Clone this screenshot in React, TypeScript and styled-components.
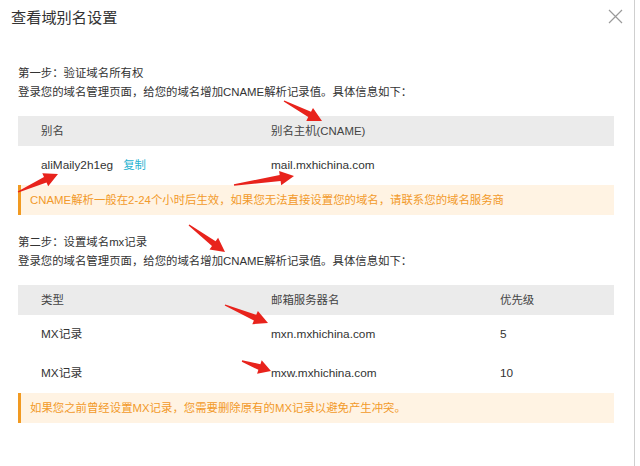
import React from "react";
import styled, { createGlobalStyle } from "styled-components";

const Global = createGlobalStyle`
  html, body { margin: 0; padding: 0; background: #ffffff; }
  body { font-family: "Liberation Sans", "Noto Sans CJK SC", sans-serif; color: #333; }
`;

const Dialog = styled.div`
  position: relative;
  width: 634px;
  height: 466px;
  border-right: 1px solid #cfcfcf;
  background: #fff;
  box-sizing: content-box;
`;

const Header = styled.div`
  display: flex;
  justify-content: space-between;
  align-items: center;
  padding: 8px 11px 0 11px;
  height: 20px;
`;

const Title = styled.h1`
  margin: 0;
  font-size: 15.2px;
  line-height: 20px;
  font-weight: normal;
  color: #333;
`;

const Close = styled.button`
  width: 16px;
  height: 16px;
  padding: 0;
  border: 0;
  background: transparent;
  display: flex;
  align-items: center;
  justify-content: center;
  margin-top: -4px;
`;

const Body = styled.div`
  padding: 0 20px 0 18px;
`;

const Step = styled.section<{ $top: number }>`
  margin-top: ${(p) => p.$top}px;
  font-size: 11.4px;
  line-height: 19px;
`;

const Text = styled.div`
  font-size: 11.4px;
  line-height: 19px;
  color: #333;
`;

const Table = styled.div`
  margin-top: 14.5px;
  display: grid;
  grid-template-columns: 230px 229px 1fr;
`;

const HeadCell = styled.div`
  background: #ebebeb;
  height: 30px;
  display: flex;
  align-items: center;
  padding-left: 23px;
  font-size: 11.4px;
  color: #444;
`;

const Cell = styled.div`
  height: 39px;
  display: flex;
  align-items: center;
  padding-left: 23px;
  font-size: 11.8px;
  color: #333;
  gap: 10px;
`;

const Copy = styled.span`
  color: #29b3d1;
  font-size: 11.4px;
`;

const Notice = styled.div`
  height: 30px;
  display: flex;
  align-items: center;
  background: #fff3e3;
  border-left: 3px solid #f19a22;
  padding-left: 9px;
  font-size: 11.4px;
  color: #f29a2a;
`;

const Overlay = styled.svg`
  position: absolute;
  left: 0;
  top: 0;
  pointer-events: none;
`;

type A = [number, number, number, number];

function arrowPoints([x1, y1, x2, y2]: A) {
  const dx = x2 - x1;
  const dy = y2 - y1;
  const len = Math.hypot(dx, dy);
  const ux = dx / len;
  const uy = dy / len;
  const nx = -uy;
  const ny = ux;
  const headLen = Math.min(14, len * 0.4);
  const headW = 7.2;
  const shaftW = 3;
  const tailW = 0.7;
  const bx = x2 - ux * headLen;
  const by = y2 - uy * headLen;
  const pts: [number, number][] = [
    [x1 + nx * tailW, y1 + ny * tailW],
    [bx + nx * shaftW, by + ny * shaftW],
    [bx + nx * headW, by + ny * headW],
    [x2, y2],
    [bx - nx * headW, by - ny * headW],
    [bx - nx * shaftW, by - ny * shaftW],
    [x1 - nx * tailW, y1 - ny * tailW],
  ];
  return pts.map((p) => p.map((v) => v.toFixed(1)).join(",")).join(" ");
}

const arrows: A[] = [
  [284, 101, 322, 121],
  [18, 192, 58, 174],
  [234, 185, 294, 176],
  [189, 225, 225, 252],
  [225, 305, 268, 323],
  [242, 361, 271, 371],
];

export default function App() {
  return (
    <>
      <Global />
      <Dialog>
        <Header>
          <Title>查看域别名设置</Title>
          <Close aria-label="关闭">
            <svg width="15" height="15" viewBox="0 0 15 15">
              <path d="M1 1 L14 14 M14 1 L1 14" stroke="#9a9a9a" strokeWidth="1.2" fill="none" />
            </svg>
          </Close>
        </Header>
        <Body>
          <Step $top={35.5}>
            <Text>第一步：验证域名所有权</Text>
            <Text>登录您的域名管理页面，给您的域名增加CNAME解析记录值。具体信息如下：</Text>
            <Table>
              <HeadCell>别名</HeadCell>
              <HeadCell>别名主机(CNAME)</HeadCell>
              <HeadCell />
              <Cell>
                aliMaily2h1eg<Copy>复制</Copy>
              </Cell>
              <Cell>mail.mxhichina.com</Cell>
              <Cell />
            </Table>
            <Notice>CNAME解析一般在2-24个小时后生效，如果您无法直接设置您的域名，请联系您的域名服务商</Notice>
          </Step>
          <Step $top={17.5}>
            <Text>第二步：设置域名mx记录</Text>
            <Text>登录您的域名管理页面，给您的域名增加CNAME解析记录值。具体信息如下：</Text>
            <Table>
              <HeadCell>类型</HeadCell>
              <HeadCell>邮箱服务器名</HeadCell>
              <HeadCell>优先级</HeadCell>
              <Cell>MX记录</Cell>
              <Cell>mxn.mxhichina.com</Cell>
              <Cell>5</Cell>
              <Cell>MX记录</Cell>
              <Cell>mxw.mxhichina.com</Cell>
              <Cell>10</Cell>
            </Table>
            <Notice>如果您之前曾经设置MX记录，您需要删除原有的MX记录以避免产生冲突。</Notice>
          </Step>
        </Body>
        <Overlay width="640" height="466" viewBox="0 0 640 466">
          {arrows.map((a, i) => (
            <polygon key={i} points={arrowPoints(a)} fill="#e8231c" />
          ))}
        </Overlay>
      </Dialog>
    </>
  );
}
